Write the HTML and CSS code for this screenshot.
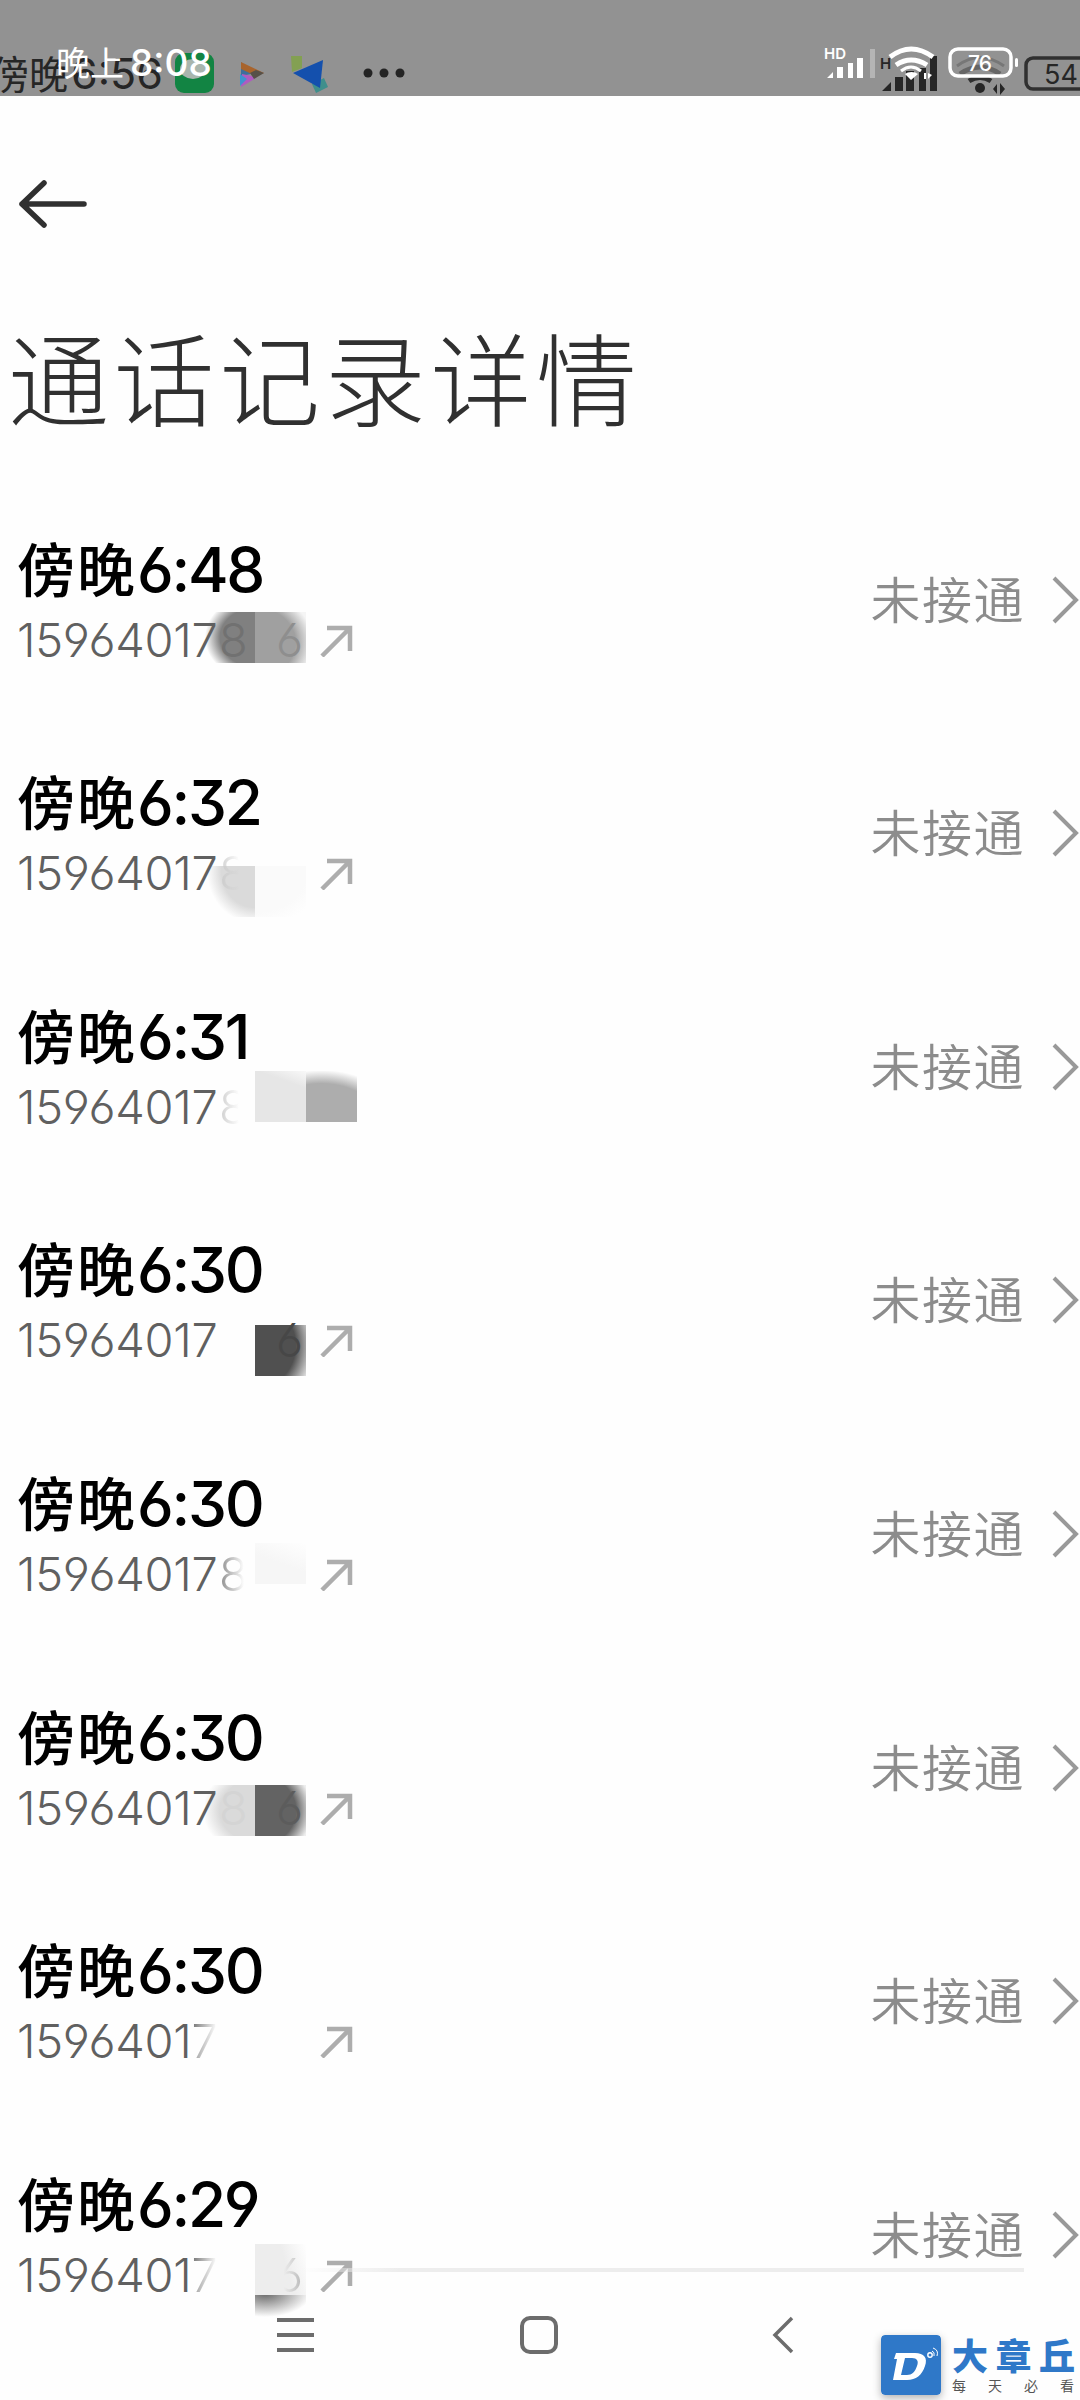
FILE: index.html
```html
<!DOCTYPE html>
<html lang="zh-CN">
<head>
    <meta charset="UTF-8">
    <meta name="viewport" content="width=device-width, initial-scale=1.0">
    <title>通话记录详情</title>
    <link rel="stylesheet" href="styles.css">
</head>
<body>
    <div class="status-bar">
        <span class="clock clock-old">傍晚<b>6:56</b></span>
        <svg class="status-icons" width="1080" height="96" viewBox="0 0 1080 96">
            <!-- app notifications -->
            <rect x="175" y="53" width="39" height="40" rx="9" fill="#128443"/>
            <ellipse cx="193" cy="69" rx="13" ry="10" fill="#a9b5ad"/>
            <path d="M241 62v14l10-2z" fill="#3c6f9c"/>
            <path d="M241 62l23 11-8 3-15-7z" fill="#a8642d"/>
            <path d="M241 87l1-13 10 2 4 2z" fill="#b05bc0"/>
            <path d="M240 74v12l7-7z" fill="#3f93cf"/>
            <path d="M256 70l8 3-10 6-4-6z" fill="#575148"/>
            <path d="M291 56h11v12l-10 4z" fill="#83a052"/>
            <path d="M312 84l12-6 4 9-12 6z" fill="#3f8f8c"/>
            <path d="M293 73l30-13-3 28z" fill="#1450ad"/>
            <g fill="#242424"><circle cx="368" cy="73" r="4.5"/><circle cx="384" cy="73" r="4.5"/><circle cx="400" cy="73" r="4.5"/></g>

            <!-- dark indicators -->
            <g fill="#262626">
                <text x="880" y="69" class="hd">H</text>
                <path d="M882 91l9-9v9zM895 77h8v14h-8zM906 71h8v20h-8zM919 68h7v23h-7zM930 56h7v35h-7z"/>
                <circle cx="980" cy="88" r="5"/>
                <path d="M993 89l4-5v10zM1000 83v12l5-6z"/>
            </g>
            <g fill="none" stroke="#303030" stroke-width="5">
                <path d="M969 81q11-7 22 0"/>
                <path d="M960 74q20-14 40 0" stroke="#666"/>
                <path d="M957 66q23-17 47 0" stroke="#777" stroke-width="3"/>
                <rect x="1026" y="58" width="64" height="31" rx="7" stroke-width="3.5"/>
            </g>
            <text x="1044" y="84" class="battery-old">54</text>

            <!-- light indicators -->
            <g fill="#fff">
                <text x="824" y="59" class="hd">HD</text>
                <path d="M827 78l6-6v6zM837 67h6v11h-6zM848 63h5v15h-5zM857 58h6v20h-6z"/>
                <path d="M870 49h5v29h-5z" fill="#b5b5b5"/>
                <path d="M905 74a8 5 0 0 1 13 0l-7 6z"/>
                <path d="M924 73h2v6h-2zM928 73l4 2-4 4z"/>
                <rect x="1015" y="58" width="3" height="9" rx="1.5"/>
            </g>
            <g fill="none" stroke="#fff" stroke-width="5">
                <path d="M890 57q21-16 43 0"/>
                <path d="M896 65q15-10 31 0"/>
                <path d="M901 71q10-8 20 0" stroke-width="3"/>
                <rect x="950" y="49" width="61" height="27" rx="8" stroke-width="3.5"/>
            </g>
            <text x="968" y="71" class="battery-new">76</text>
        </svg>
        <span class="clock clock-new">晚上<b>8:08</b></span>
    </div>

    <header class="header">
        <svg class="back" width="70" height="50" viewBox="0 0 70 50">
            <path d="M27 4L5 25l22 21M5 25h62"/>
        </svg>
        <h1>通话记录详情</h1>
    </header>

    <ul class="calls" id="calls"></ul>

    <nav class="nav-bar">
        <svg width="37" height="40" viewBox="0 0 37 40"><path d="M0 5h37M0 20h37M0 35h37"/></svg>
        <svg width="40" height="40" viewBox="0 0 40 40"><rect x="3" y="3" width="34" height="34" rx="8"/></svg>
        <svg width="22" height="40" viewBox="0 0 22 40"><path d="M20 3L3 20l17 17"/></svg>
    </nav>

    <div class="brand">
        <svg class="brand-logo" width="60" height="60" viewBox="0 0 60 60">
            <rect width="60" height="60" rx="4" fill="#2f78c8"/>
            <path fill="#fff" fill-rule="evenodd" d="M15 18h19c9 0 13 5 10 13-3 9-9 14-18 14H12l4-21h-3zM24 23l-4 17h6c5 0 8-3 10-9 2-5 0-8-5-8z"/>
            <g fill="none" stroke="#fff"><circle cx="49" cy="20" r="2.2" stroke-width="1.4"/><path d="M51 16q3 1 2 5M52 13q6 2 4 8"/></g>
        </svg>
        <div class="brand-text">
            <div class="brand-name">大章丘</div>
            <div class="brand-slogan"><span>每</span><span>天</span><span>必</span><span>看</span></div>
        </div>
    </div>

    <script>
        const calls = [
            { time: '6:48', cls: 'c1', arrow: true },
            { time: '6:32', cls: 'c2', arrow: true },
            { time: '6:31', cls: 'c3', arrow: false },
            { time: '6:30', cls: 'c4', arrow: true },
            { time: '6:30', cls: 'c5', arrow: true },
            { time: '6:30', cls: 'c6', arrow: true },
            { time: '6:30', cls: 'c7', arrow: true },
            { time: '6:29', cls: 'c8', arrow: true }
        ];

        document.getElementById('calls').innerHTML = calls.map(call => `
            <li class="call ${call.cls}">
                <div class="info">
                    <div class="time">傍晚<b>${call.time}</b></div>
                    <div class="number">
                        <i class="mask mask-left"></i><i class="mask mask-right"></i>
                        <span class="digits">1596401<span class="seven">7</span></span><span class="eight">8</span><span class="six">6</span>
                        ${call.arrow ? '<svg class="outgoing" width="34" height="34" viewBox="0 0 34 34"><path d="M2 33L30 5M7 5h23v23"/></svg>' : ''}
                    </div>
                </div>
                <span class="state">未接通</span>
                <svg class="chevron" width="27" height="48" viewBox="0 0 27 48"><path d="M2 2l22 22L2 46"/></svg>
            </li>`).join('');
    </script>
</body>
</html>
```
FILE: styles.css
```css
* {
    box-sizing: border-box;
}

body {
    margin: 0;
    width: 1080px;
    height: 2400px;
    position: relative;
    overflow: hidden;
    background-color: #fefefe;
    font-family: Inter, "Noto Sans CJK SC", sans-serif;
    display: flex;
    flex-direction: column;
}

/* status bar */
.status-bar {
    position: relative;
    height: 96px;
    flex-shrink: 0;
    background-color: #929292;
    overflow: hidden;
}

.status-icons {
    position: absolute;
    left: 0;
    top: 0;
}

.clock {
    position: absolute;
    white-space: nowrap;
    font-family: "Noto Sans CJK SC", sans-serif;
}

.clock b {
    font-family: Inter, sans-serif;
    font-weight: 500;
}

.clock-old {
    left: -10px;
    top: 52px;
    font-size: 39px;
    line-height: 40px;
    color: #262626;
}

.clock-old b {
    font-size: 43px;
    font-weight: 400;
    margin-left: 3px;
}

.clock-new {
    left: 56px;
    top: 42px;
    font-size: 34px;
    line-height: 40px;
    color: #fff;
}

.clock-new b {
    font-size: 37px;
    margin-left: 6px;
    letter-spacing: 0;
}

.hd {
    font: 600 15px Inter, sans-serif;
}

.battery-old {
    font: 400 27px Inter, sans-serif;
    fill: #262626;
}

.battery-new {
    font: 500 21px Inter, sans-serif;
    fill: #fff;
    letter-spacing: -1px;
}

/* header */
.header {
    height: 387px;
    flex-shrink: 0;
    padding: 83px 0 0 17px;
}

.back {
    display: block;
    fill: none;
    stroke: #303030;
    stroke-width: 5.5;
    stroke-linecap: round;
    stroke-linejoin: round;
}

h1 {
    margin: 76px 0 0 -9px;
    font-family: "Noto Sans CJK SC", sans-serif;
    font-size: 101px;
    font-weight: 300;
    line-height: 140px;
    letter-spacing: 4.6px;
    color: #303030;
}

/* call list */
.calls {
    list-style: none;
    margin: 0;
    padding: 0;
}

.call {
    height: 233.57px;
    display: flex;
    align-items: center;
    padding: 0 1px 0 17px;
}

.info {
    flex: 1;
}

.time {
    height: 80px;
    line-height: 74px;
    font-family: "Noto Sans CJK SC", sans-serif;
    font-size: 58px;
    font-weight: 500;
    letter-spacing: 2px;
    color: #000;
    white-space: nowrap;
}

.time b {
    font-family: Inter, sans-serif;
    font-size: 62px;
    font-weight: 500;
    letter-spacing: -2.3px;
    font-feature-settings: "cv03", "cv04", "cv09";
}

.number {
    position: relative;
    height: 60px;
    line-height: 62px;
    display: flex;
    align-items: center;
    font-size: 47px;
    font-weight: 300;
    color: #606060;
    font-feature-settings: "cv03", "cv04", "cv09";
}

.digits,
.eight,
.six {
    position: relative;
}

.digits {
    width: 202px;
    letter-spacing: -0.3px;
    white-space: nowrap;
}

.eight {
    width: 57px;
}

.six {
    width: 44px;
}

.outgoing {
    fill: none;
    stroke: #adadad;
    stroke-width: 4.5;
}

.state {
    font-family: "Noto Sans CJK SC", sans-serif;
    font-size: 50px;
    font-weight: 350;
    line-height: 74px;
    letter-spacing: 1.5px;
    color: #8c8c8c;
    margin-right: 27px;
    padding-bottom: 6px;
}

.chevron {
    fill: none;
    stroke: #999;
    stroke-width: 4;
}

/* smudges over the end of each number */
.mask {
    position: absolute;
    top: 2px;
    height: 51px;
}

.mask-left {
    left: 188px;
    width: 50px;
}

.mask-right {
    left: 238px;
    width: 51px;
}

.eight,
.six {
    color: transparent;
}

.c1 .mask-left {
    background: radial-gradient(ellipse 50px 42px at 100% 50%, #808080 70%, transparent 100%);
}

.c1 .mask-right {
    background: radial-gradient(ellipse 58px 50px at 0 60%, #a0a0a0 70%, #f5f5f5 100%);
}

.c1 .eight {
    color: #717171;
}

.c1 .six {
    color: #8e8e8e;
}

.c2 .mask {
    top: 23px;
}

.c2 .mask-left {
    background: radial-gradient(ellipse 48px 52px at 100% 10%, #dadada 70%, transparent 100%);
}

.c2 .mask-right {
    background: radial-gradient(ellipse 70px 55px at 0 10%, #fafafa 75%, transparent 100%);
}

.c2 .eight,
.c3 .eight,
.c5 .eight {
    color: transparent;
    background: linear-gradient(90deg, #ccc 0, transparent 20px);
    -webkit-background-clip: text;
    background-clip: text;
}

.c5 .eight {
    background-image: linear-gradient(90deg, #888 0, transparent 25px);
}

.c3 .mask {
    top: -6px;
}

.c3 .mask-left {
    left: 238px;
    width: 51px;
    background: linear-gradient(20deg, #e6e6e6 75%, #f8f8f8 100%);
}

.c3 .mask-right {
    left: 289px;
    background: radial-gradient(ellipse 78px 52px at 30% 100%, #adadad 74%, transparent 100%);
}

.c4 .mask-left,
.c5 .mask-left,
.c7 .mask,
.c8 .mask-left {
    display: none;
}

.c4 .mask-right {
    top: 15px;
    background: radial-gradient(ellipse 58px 62px at 0 40%, #505050 70%, #ddd 100%);
}

.c4 .six {
    color: #474747;
}

.c5 .mask-right {
    top: -1px;
    height: 41px;
    background: linear-gradient(20deg, #f6f6f6 50%, transparent);
}

.c6 .mask {
    top: 7px;
}

.c6 .mask-left {
    background: radial-gradient(ellipse 52px 45px at 100% 50%, #dadada 68%, transparent 100%);
}

.c6 .mask-right {
    background: radial-gradient(ellipse 57px 50px at 0 50%, #636363 72%, #eee 100%);
}

.c6 .eight {
    color: #d4d4d4;
}

.c6 .six {
    color: #5c5c5c;
}

.c7 .seven,
.c8 .seven {
    color: transparent;
    background: linear-gradient(100deg, #666 0, transparent 75%);
    -webkit-background-clip: text;
    background-clip: text;
}

.c8 .mask-right {
    top: -1px;
    height: 75px;
    background: radial-gradient(ellipse 46px 24px at 20% 49px, #666, transparent);
}

.c8 .mask-right::before {
    content: "";
    display: block;
    height: 51px;
    background: linear-gradient(75deg, #ededed 60%, #fefefe);
}

.c8 .six {
    color: transparent;
    background: linear-gradient(90deg, transparent 8px, #bbb 25px);
    -webkit-background-clip: text;
    background-clip: text;
}

/* bottom navigation */
.nav-bar {
    position: absolute;
    left: 0;
    top: 2268px;
    width: 1024px;
    height: 132px;
    padding: 47px 0 0 277px;
    display: flex;
}

.nav-bar::before {
    content: "";
    position: absolute;
    left: 300px;
    right: 0;
    top: 0;
    height: 4px;
    background: linear-gradient(90deg, transparent, #ededed 100px);
}

.nav-bar svg {
    fill: none;
    stroke: #6c6c6c;
    stroke-width: 4;
}

.nav-bar svg:nth-child(2) {
    margin-left: 205px;
}

.nav-bar svg:nth-child(3) {
    margin-left: 213px;
    stroke-width: 3.5;
}

/* corner brand */
.brand {
    position: absolute;
    left: 881px;
    top: 2335px;
    display: flex;
    gap: 11px;
}

.brand-logo {
    border-radius: 4px;
    box-shadow: 0 3px 9px rgba(0, 0, 0, 0.3);
}

.brand-name {
    font-family: "Noto Sans CJK SC", sans-serif;
    font-size: 36px;
    font-weight: 900;
    line-height: 38px;
    height: 42px;
    letter-spacing: 7.5px;
    color: #2f78c8;
    white-space: nowrap;
}

.brand-slogan {
    width: 122px;
    display: flex;
    justify-content: space-between;
    font-family: "Noto Sans CJK SC", sans-serif;
    font-size: 14px;
    line-height: 16px;
    color: #555;
}
```
